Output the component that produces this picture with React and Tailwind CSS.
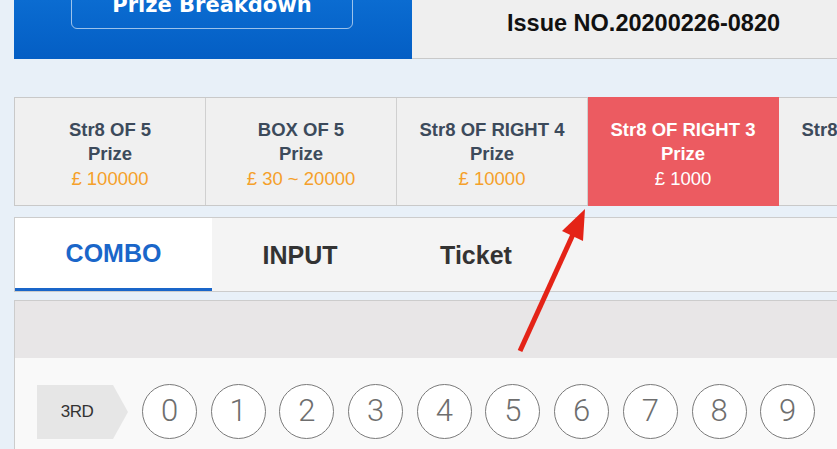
import React from 'react';

const prizes = [
  { title: 'Str8 OF 5', amount: '£ 100000' },
  { title: 'BOX OF 5', amount: '£ 30 ~ 20000' },
  { title: 'Str8 OF RIGHT 4', amount: '£ 10000' },
  { title: 'Str8 OF RIGHT 3', amount: '£ 1000', active: true },
  { title: 'Str8 OF RIGHT 2', amount: '£ 100' },
];

const digits = [0, 1, 2, 3, 4, 5, 6, 7, 8, 9];

export default function App() {
  return (
    <div className="relative w-[837px] h-[449px] overflow-hidden bg-[#e8f0f8] font-['Liberation_Sans',Arial,sans-serif]">
      <div className="pl-[14px]">
        {/* header */}
        <div className="flex h-[59px]">
          <div className="w-[398px] shrink-0 bg-gradient-to-b from-[#0b6cd1] to-[#045ec4] pl-[57px]">
            <div className="-mt-[17px] w-[282px] h-[46px] rounded-md border border-white/60 flex items-center justify-center text-white font-bold text-[21px] font-['DejaVu_Sans',sans-serif]">
              Prize Breakdown
            </div>
          </div>
          <div className="flex-1 bg-[#efefef] border-b border-[#c9c9c9] pl-[95px] pt-[6px]">
            <span className="text-[23.5px] font-bold text-[#111]">Issue NO.20200226-0820</span>
          </div>
        </div>

        {/* prize row */}
        <div className="mt-[38px] flex h-[109px] w-[1000px] border-y border-l border-[#c9c9c9] bg-[#f0f0f0]">
          {prizes.map((p) => (
            <div
              key={p.title}
              className={`w-[191px] shrink-0 flex flex-col items-center justify-center pt-[6px] text-[18.5px] leading-[24.5px] border-r ${
                p.active ? 'bg-[#ec5b61] text-white border-[#ec5b61] -my-px' : 'text-[#3c4a5b] border-[#d0d0d0]'
              }`}
            >
              <div className="font-bold whitespace-nowrap">{p.title}</div>
              <div className="font-bold">Prize</div>
              <div className={p.active ? 'text-white' : 'text-[#f5a02a]'}>{p.amount}</div>
            </div>
          ))}
        </div>

        {/* tabs */}
        <div className="mt-[11px] flex h-[75px] w-[900px] border border-[#cccccc] bg-[#f4f4f4] text-[25px] font-bold">
          <div className="w-[197px] bg-white border-b-[3px] border-[#1a66c9] flex items-center justify-center pt-[2px] text-[#1a66c9]">
            COMBO
          </div>
          <div className="w-[176px] flex items-center justify-center pt-[2px] text-[#333]">INPUT</div>
          <div className="w-[176px] flex items-center justify-center pt-[2px] text-[#333]">Ticket</div>
        </div>

        {/* number panel */}
        <div className="mt-[8px] w-[900px] border border-[#cccccc] bg-[#f9f9f9] h-[200px]">
          <div className="h-[57px] bg-[#e8e6e7]"></div>
          <div className="flex items-center pl-[22px] pt-[26px]">
            <div className="flex items-center shrink-0">
              <div className="w-[76px] h-[54px] bg-[#e6e6e6] flex items-center justify-center text-[17px] text-[#333] tracking-tight pl-[4px]">
                3RD
              </div>
              <div className="w-0 h-0 border-y-[27px] border-y-transparent border-l-[15px] border-l-[#e6e6e6]"></div>
            </div>
            <div className="ml-[14px] flex gap-[13.7px]">
              {digits.map((d) => (
                <div
                  key={d}
                  className="w-[55px] h-[55px] shrink-0 rounded-full border-[1.5px] border-[#7a7a7a] bg-white flex items-center justify-center text-[31px] font-light text-[#6e6e6e] font-['Roboto',sans-serif]"
                >
                  {d}
                </div>
              ))}
            </div>
          </div>
        </div>
      </div>

      {/* annotation arrow */}
      <svg className="absolute inset-0 pointer-events-none" width="837" height="449" viewBox="0 0 837 449">
        <line x1="520" y1="351" x2="575" y2="230" stroke="#e42317" strokeWidth="5" />
        <polygon points="585,209 562,231 583,241" fill="#e42317" />
      </svg>
    </div>
  );
}
